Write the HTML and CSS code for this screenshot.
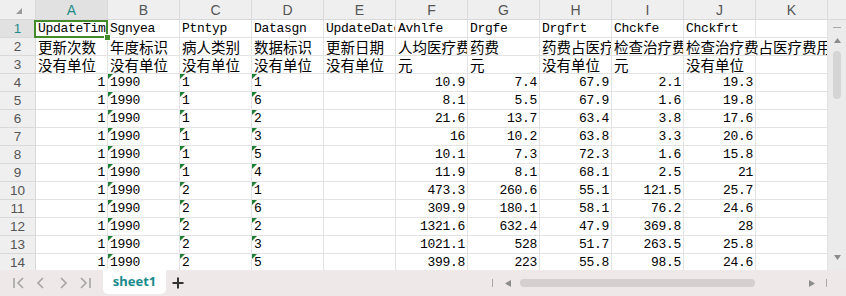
FILE: index.html
```html
<!DOCTYPE html>
<html lang="zh">
<head>
    <meta charset="UTF-8">
    <title>sheet1</title>
    <link rel="stylesheet" href="styles.css">
</head>
<body>

<div class="window">
    <div class="main">
        <div class="sheet">
            <div class="row hdr">
                <div class="corner"><span class="corner-tri"></span></div>
                <div class="ch sel">A</div><div class="ch">B</div><div class="ch">C</div><div class="ch">D</div>
                <div class="ch">E</div><div class="ch">F</div><div class="ch">G</div><div class="ch">H</div>
                <div class="ch">I</div><div class="ch">J</div><div class="ch">K</div>
            </div>

            <div class="row first">
                <div class="rh sel">1</div>
                <div class="c">UpdateTime</div><div class="c">Sgnyea</div><div class="c">Ptntyp</div><div class="c">Datasgn</div>
                <div class="c">UpdateDate</div><div class="c">Avhlfe</div><div class="c">Drgfe</div><div class="c">Drgfrt</div>
                <div class="c">Chckfe</div><div class="c">Chckfrt</div><div class="c"></div>
                <span class="selbox"></span>
                <span class="handle"></span>
            </div>
            <div class="row">
                <div class="rh">2</div>
                <div class="c zh">更新次数</div><div class="c zh">年度标识</div><div class="c zh">病人类别</div><div class="c zh">数据标识</div>
                <div class="c zh">更新日期</div><div class="c zh">人均医疗费用</div><div class="c zh">药费</div><div class="c zh">药费占医疗费用比例</div>
                <div class="c zh">检查治疗费</div><div class="c zh spill">检查治疗费占医疗费用比例</div><div class="c"></div>
            </div>
            <div class="row">
                <div class="rh">3</div>
                <div class="c zh">没有单位</div><div class="c zh">没有单位</div><div class="c zh">没有单位</div><div class="c zh">没有单位</div>
                <div class="c zh">没有单位</div><div class="c zh">元</div><div class="c zh">元</div><div class="c zh">没有单位</div>
                <div class="c zh">元</div><div class="c zh">没有单位</div><div class="c"></div>
            </div>

            <div class="row">
                <div class="rh">4</div>
                <div class="c r">1</div><div class="c t">1990</div><div class="c t">1</div><div class="c t">1</div><div class="c"></div>
                <div class="c r">10.9</div><div class="c r">7.4</div><div class="c r">67.9</div><div class="c r">2.1</div><div class="c r">19.3</div><div class="c"></div>
            </div>
            <div class="row">
                <div class="rh">5</div>
                <div class="c r">1</div><div class="c t">1990</div><div class="c t">1</div><div class="c t">6</div><div class="c"></div>
                <div class="c r">8.1</div><div class="c r">5.5</div><div class="c r">67.9</div><div class="c r">1.6</div><div class="c r">19.8</div><div class="c"></div>
            </div>
            <div class="row">
                <div class="rh">6</div>
                <div class="c r">1</div><div class="c t">1990</div><div class="c t">1</div><div class="c t">2</div><div class="c"></div>
                <div class="c r">21.6</div><div class="c r">13.7</div><div class="c r">63.4</div><div class="c r">3.8</div><div class="c r">17.6</div><div class="c"></div>
            </div>
            <div class="row">
                <div class="rh">7</div>
                <div class="c r">1</div><div class="c t">1990</div><div class="c t">1</div><div class="c t">3</div><div class="c"></div>
                <div class="c r">16</div><div class="c r">10.2</div><div class="c r">63.8</div><div class="c r">3.3</div><div class="c r">20.6</div><div class="c"></div>
            </div>
            <div class="row">
                <div class="rh">8</div>
                <div class="c r">1</div><div class="c t">1990</div><div class="c t">1</div><div class="c t">5</div><div class="c"></div>
                <div class="c r">10.1</div><div class="c r">7.3</div><div class="c r">72.3</div><div class="c r">1.6</div><div class="c r">15.8</div><div class="c"></div>
            </div>
            <div class="row">
                <div class="rh">9</div>
                <div class="c r">1</div><div class="c t">1990</div><div class="c t">1</div><div class="c t">4</div><div class="c"></div>
                <div class="c r">11.9</div><div class="c r">8.1</div><div class="c r">68.1</div><div class="c r">2.5</div><div class="c r">21</div><div class="c"></div>
            </div>
            <div class="row">
                <div class="rh">10</div>
                <div class="c r">1</div><div class="c t">1990</div><div class="c t">2</div><div class="c t">1</div><div class="c"></div>
                <div class="c r">473.3</div><div class="c r">260.6</div><div class="c r">55.1</div><div class="c r">121.5</div><div class="c r">25.7</div><div class="c"></div>
            </div>
            <div class="row">
                <div class="rh">11</div>
                <div class="c r">1</div><div class="c t">1990</div><div class="c t">2</div><div class="c t">6</div><div class="c"></div>
                <div class="c r">309.9</div><div class="c r">180.1</div><div class="c r">58.1</div><div class="c r">76.2</div><div class="c r">24.6</div><div class="c"></div>
            </div>
            <div class="row">
                <div class="rh">12</div>
                <div class="c r">1</div><div class="c t">1990</div><div class="c t">2</div><div class="c t">2</div><div class="c"></div>
                <div class="c r">1321.6</div><div class="c r">632.4</div><div class="c r">47.9</div><div class="c r">369.8</div><div class="c r">28</div><div class="c"></div>
            </div>
            <div class="row">
                <div class="rh">13</div>
                <div class="c r">1</div><div class="c t">1990</div><div class="c t">2</div><div class="c t">3</div><div class="c"></div>
                <div class="c r">1021.1</div><div class="c r">528</div><div class="c r">51.7</div><div class="c r">263.5</div><div class="c r">25.8</div><div class="c"></div>
            </div>
            <div class="row">
                <div class="rh">14</div>
                <div class="c r">1</div><div class="c t">1990</div><div class="c t">2</div><div class="c t">5</div><div class="c"></div>
                <div class="c r">399.8</div><div class="c r">223</div><div class="c r">55.8</div><div class="c r">98.5</div><div class="c r">24.6</div><div class="c"></div>
            </div>
        </div>

        <!-- barra vertical -->
        <div class="vscroll">
            <div class="vs-top"></div>
            <div class="vs-split"></div>
            <svg class="vs-arrow" width="7" height="5" viewBox="0 0 7 5"><path d="M3.5 0 L7 5 L0 5 Z" fill="#8c8c8c"/></svg>
            <div class="vs-thumb"></div>
            <div class="vs-fill"></div>
            <svg class="vs-arrow" width="7" height="5" viewBox="0 0 7 5"><path d="M0 0 L7 0 L3.5 5 Z" fill="#8c8c8c"/></svg>
        </div>
    </div>

    <div class="bottom">
        <div class="nav">
            <svg width="22" height="26" viewBox="0 0 22 26"><path d="M6 8 V18 M15 8 L10 13 L15 18" stroke="#a7a4a4" stroke-width="1.6" fill="none"/></svg>
            <svg width="22" height="26" viewBox="0 0 22 26"><path d="M13 8 L8 13 L13 18" stroke="#a7a4a4" stroke-width="1.6" fill="none"/></svg>
            <svg width="22" height="26" viewBox="0 0 22 26"><path d="M9 8 L14 13 L9 18" stroke="#a7a4a4" stroke-width="1.6" fill="none"/></svg>
            <svg width="22" height="26" viewBox="0 0 22 26"><path d="M7 8 L12 13 L7 18 M16 8 V18" stroke="#a7a4a4" stroke-width="1.6" fill="none"/></svg>
        </div>
        <div class="tab">sheet1</div>
        <div class="plus">
            <svg width="12" height="12" viewBox="0 0 12 12"><path d="M6 0.5 V11.5 M0.5 6 H11.5" stroke="#333" stroke-width="2"/></svg>
        </div>
        <div class="hscroll">
            <span class="hs-bar"></span>
            <svg class="hs-left" width="6" height="7" viewBox="0 0 6 7"><path d="M6 0 L6 7 L0 3.5 Z" fill="#8c8c8c"/></svg>
            <div class="hs-thumb"></div>
            <div class="hs-fill"></div>
            <svg width="6" height="7" viewBox="0 0 6 7"><path d="M0 0 L0 7 L6 3.5 Z" fill="#8c8c8c"/></svg>
            <span class="hs-bar end"></span>
        </div>
    </div>
</div>

</body>
</html>
```

FILE: styles.css
```css
body {
    margin: 0;
    background: #ffffff;
    font-family: "Liberation Mono", "Noto Sans CJK SC", monospace;
}
.window {
    width: 846px;
    height: 296px;
    overflow: hidden;
}
.main {
    display: flex;
    height: 270px;
}
.sheet {
    width: 828px;
    height: 270px;
    overflow: hidden;
    background: #fff;
}
.row {
    display: grid;
    grid-template-columns: 36px repeat(11, 72px);
    height: 18px;
}
.row.hdr {
    height: 20px;
}
.row.first {
    position: relative;
    z-index: 2;
}
.corner, .ch, .rh {
    background: #efefef;
    border-right: 1px solid #d9d9d9;
    border-bottom: 1px solid #d9d9d9;
    box-sizing: border-box;
    color: #555;
    font-family: "Liberation Sans", "Noto Sans", sans-serif;
    font-size: 14px;
    display: flex;
    align-items: center;
    justify-content: center;
}
.corner {
    position: relative;
}
.corner-tri {
    position: absolute;
    right: 13px;
    bottom: 5px;
    width: 0;
    height: 0;
    border-left: 6px solid transparent;
    border-bottom: 6px solid #9a9a9a;
}
.ch.sel, .rh.sel {
    background: #e1e1e1;
    color: #1f8c86;
}
.rh {
    font-size: 13.5px;
}
.c {
    position: relative;
    box-sizing: border-box;
    border-right: 1px solid #e3e3e3;
    border-bottom: 1px solid #e3e3e3;
    padding: 0 1px 0 2px;
    font-size: 13px;
    line-height: 18px;
    letter-spacing: -0.3px;
    color: #000;
    white-space: nowrap;
    overflow: hidden;
}
.c.zh {
    font-family: "Noto Sans CJK SC", sans-serif;
    font-size: 14.5px;
    line-height: 17px;
    padding-left: 2px;
    letter-spacing: 0;
}
.c.r {
    text-align: right;
    padding-right: 2px;
}
.c.spill {
    overflow: visible;
    border-right-color: #fff;
}
.c.t::before {
    content: "";
    position: absolute;
    left: 0;
    top: 0;
    width: 0;
    height: 0;
    border-top: 5px solid #1e7e34;
    border-right: 5px solid transparent;
}

/* celda activa */
.selbox {
    position: absolute;
    left: 34px;
    top: 0;
    width: 74px;
    height: 18px;
    border: 2px solid #438b2a;
    box-sizing: border-box;
}
.handle {
    position: absolute;
    left: 104px;
    top: 14px;
    width: 5px;
    height: 5px;
    background: #438b2a;
    border: 1px solid #fff;
}

/* barra vertical */
.vscroll {
    width: 18px;
    height: 270px;
    background: #ebebeb;
    display: flex;
    flex-direction: column;
    align-items: center;
}
.vs-top {
    width: 18px;
    height: 20px;
    background: #efefef;
    border-bottom: 1px solid #d9d9d9;
    box-sizing: border-box;
    flex-shrink: 0;
}
.vs-split {
    width: 8px;
    height: 1px;
    background: #a8a8a8;
    margin-top: 7px;
}
.vs-arrow {
    margin-top: 10px;
    flex-shrink: 0;
}
.vs-thumb {
    width: 8px;
    height: 48px;
    margin-top: 8px;
    background: #d5d5d5;
    border-radius: 4px;
}
.vs-fill {
    flex: 1;
}
.vscroll .vs-arrow:last-child {
    margin: 0 0 10px;
}

/* barra inferior */
.bottom {
    height: 26px;
    background: #eee8e8;
    display: flex;
    align-items: flex-start;
}
.nav {
    display: flex;
    width: 103px;
    padding-left: 8px;
    box-sizing: border-box;
}
.tab {
    width: 63px;
    height: 24px;
    background: #fff;
    border-radius: 0 0 5px 5px;
    color: #1b8a8a;
    font-family: "Noto Sans", "Liberation Sans", sans-serif;
    font-weight: bold;
    font-size: 13px;
    line-height: 23px;
    text-align: center;
}
.plus {
    width: 24px;
    height: 26px;
    display: flex;
    align-items: center;
    justify-content: center;
}
.hscroll {
    margin-left: auto;
    display: flex;
    align-items: center;
    height: 26px;
    width: 354px;
}
.hs-bar {
    width: 1px;
    height: 8px;
    background: #a8a8a8;
}
.hs-bar.end {
    margin: 0 19px 0 11px;
}
.hs-left {
    margin-left: 12px;
}
.hs-thumb {
    width: 235px;
    height: 8px;
    margin-left: 9px;
    background: #d5cfcf;
    border-radius: 4px;
}
.hs-fill {
    flex: 1;
}
```
